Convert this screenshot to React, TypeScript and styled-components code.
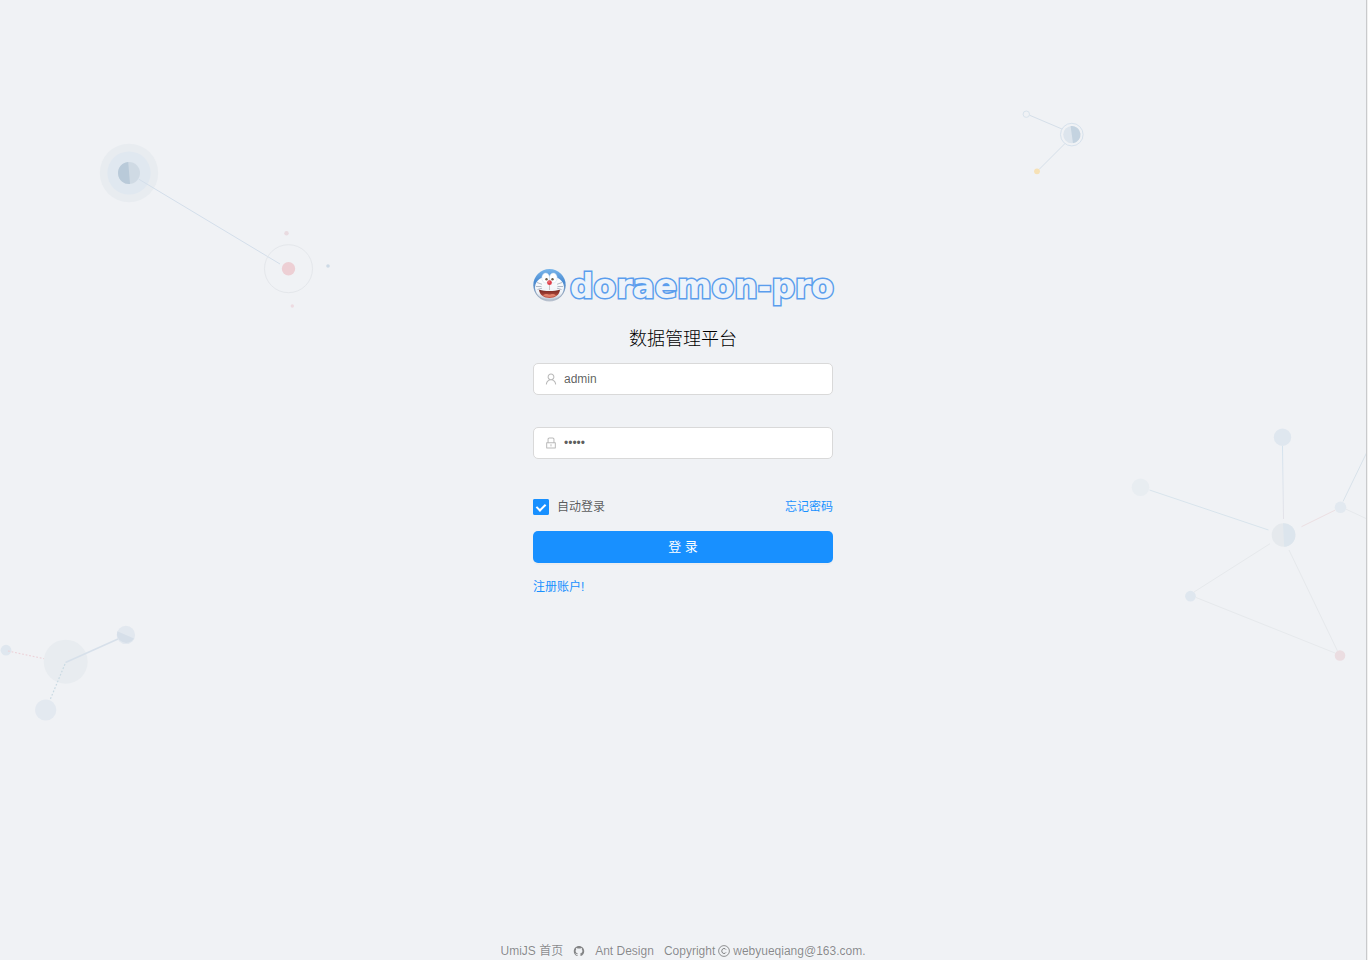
import React from "react";
import styled, { createGlobalStyle } from "styled-components";
import {
  AiOutlineUser,
  AiOutlineLock,
  AiFillGithub,
} from "react-icons/ai";

const GlobalStyle = createGlobalStyle`
  * { box-sizing: border-box; }
  body {
    margin: 0;
    background: #f0f2f5;
    color: rgba(0, 0, 0, 0.65);
    font-family: "Liberation Sans", "Noto Sans CJK SC", sans-serif;
    font-size: 12px;
    line-height: 18px;
  }
`;

const Shell = styled.div`
  display: flex;
  min-height: 100vh;
`;

const Page = styled.div`
  position: relative;
  flex: 1;
  min-width: 0;
  display: flex;
  flex-direction: column;
  overflow: hidden;
`;

const Edge = styled.div`
  width: 2px;
  background: #f1f1f1;
  border-left: 1px solid #c9cacc;
`;

const Backdrop = styled.svg`
  position: absolute;
  inset: 0;
  width: 100%;
  height: 100%;
  pointer-events: none;
`;

const Main = styled.main`
  position: relative;
  flex: 1;
  display: flex;
  flex-direction: column;
  align-items: center;
  padding: 265px 16px 32px;
`;

const LoginForm = styled.form`
  width: 100%;
  max-width: 300px;
  display: flex;
  flex-direction: column;
`;

const Brand = styled.div`
  display: flex;
  align-items: center;
  gap: 4px;
  height: 40px;
`;

const BrandFace = styled.svg`
  flex: none;
  width: 33px;
  height: 33px;
`;

const BrandName = styled.span`
  padding-top: 3px;
  font-family: "DejaVu Sans", sans-serif;
  font-size: 33px;
  line-height: 40px;
  font-weight: 700;
  color: #edf3fa;
  -webkit-text-stroke: 3px #5a9ded;
  paint-order: stroke fill;
  white-space: nowrap;
`;

const Title = styled.h1`
  margin: 19px 0 9px;
  font-size: 18px;
  line-height: 30px;
  font-weight: 300;
  color: #000;
  text-align: center;
`;

const Field = styled.label`
  display: flex;
  align-items: center;
  gap: 6px;
  height: 32px;
  margin-bottom: 32px;
  padding: 0 11px 0 10px;
  background: #fff;
  border: 1px solid #d9d9d9;
  border-radius: 5px;

  svg {
    flex: none;
    width: 14px;
    height: 14px;
    color: rgba(0, 0, 0, 0.28);
  }
`;

const TextInput = styled.input`
  flex: 1;
  min-width: 0;
  padding: 0;
  border: 0;
  outline: 0;
  background: transparent;
  color: rgba(0, 0, 0, 0.65);
  font: inherit;
`;

const Options = styled.div`
  display: flex;
  align-items: center;
  justify-content: space-between;
  height: 32px;
  margin-bottom: 8px;
`;

const CheckLabel = styled.label`
  display: flex;
  align-items: center;
  gap: 8px;
`;

const Checkbox = styled.input`
  appearance: none;
  display: flex;
  align-items: flex-start;
  justify-content: center;
  width: 16px;
  height: 16px;
  margin: 0;
  padding-top: 3px;
  border-radius: 2px;
  box-shadow: inset 0 0 0 1px #1890ff;

  &:checked {
    background: #1890ff;
  }
  &:checked::after {
    content: "";
    width: 6px;
    height: 9px;
    border: solid #fff;
    border-width: 0 2px 2px 0;
    box-sizing: border-box;
    transform: rotate(45deg);
  }
`;

const TextLink = styled.a`
  color: #1890ff;
  text-decoration: none;
`;

const SubmitButton = styled.button`
  height: 32px;
  margin: 0 0 15px;
  padding: 0;
  border: 0;
  border-radius: 5px;
  background: #1890ff;
  color: #fff;
  font: inherit;
  font-size: 13px;
  box-shadow: 0 2px 0 rgba(0, 0, 0, 0.02);
  cursor: pointer;
`;

const Footer = styled.footer`
  position: relative;
  display: flex;
  flex-wrap: wrap;
  justify-content: center;
  gap: 10px;
  color: rgba(0, 0, 0, 0.45);
`;

const FooterLink = styled.a`
  display: flex;
  align-items: center;
  color: inherit;
  text-decoration: none;
`;

const Copyright = styled.span`
  display: flex;
  align-items: center;
  gap: 3px;
`;

function NetworkBackdrop() {
  return (
    <Backdrop viewBox="0 0 1366 960" preserveAspectRatio="xMidYMin slice" fill="none" aria-hidden="true">
      <g>
        <circle cx="129" cy="173" r="29.2" fill="#e8ecf0" />
        <circle cx="129" cy="173" r="21.6" fill="#e0e8f0" />
        <circle cx="129" cy="173" r="11" fill="#cfdae4" />
        <path d="M128.2 162A11 11 0 0 0 130 184Z" fill="#b9cad9" />
        <path d="M138.500 179L280 264" stroke="#d3deea" />
        <circle cx="288.500" cy="268.700" r="24" stroke="#e4e7eb" />
        <circle cx="288.500" cy="268.700" r="6.700" fill="#edcfd4" />
        <circle cx="286.500" cy="233.200" r="2.200" fill="#e9dbe0" />
        <circle cx="328" cy="266" r="1.800" fill="#cddae6" />
        <circle cx="292.300" cy="306" r="1.700" fill="#eddbe1" />
      </g>
      <g>
        <path d="M1029.500 115.200L1062 129M1065 143.500L1039 169.500" stroke="#d5dfe9" />
        <circle cx="1026.300" cy="114.200" r="3.200" stroke="#d8e3ec" />
        <circle cx="1037" cy="171.300" r="2.900" fill="#f6e1b6" />
        <circle cx="1071.800" cy="134.600" r="11.300" stroke="#d6e1ec" />
        <circle cx="1071.800" cy="134.600" r="8.600" fill="#dde5ed" />
        <path d="M1070.600 126A8.600 8.600 0 0 1 1073 143.200Z" fill="#c4d3e0" />
      </g>
      <g>
        <path d="M1149.500 490L1268.500 530" stroke="#d8e4ec" />
        <path d="M1282.500 446L1283.500 519" stroke="url(#stem)" />
        <path d="M1343 501.500L1366.500 453" stroke="#d8e2ea" />
        <path d="M1301.500 526.700L1335 510.200" stroke="#ecdfe2" />
        <path d="M1346 509.200L1366 518.500M1270 543.700L1194 592M1289 550L1337.500 651M1196 597.500L1335 653" stroke="#e6e9ec" />
        <circle cx="1140.500" cy="487.300" r="8.800" fill="#e8edf1" />
        <circle cx="1282.500" cy="437.200" r="8.700" fill="#dfe7ef" />
        <circle cx="1340.500" cy="507.300" r="5.800" fill="#e2e9f0" />
        <circle cx="1283.500" cy="535" r="11.800" fill="#e5e9ed" />
        <path d="M1283 523.200A11.800 11.800 0 0 1 1284.200 546.800Z" fill="#dce5ed" />
        <circle cx="1190.500" cy="596.200" r="5.400" fill="#dfe7ef" />
        <circle cx="1340" cy="655.500" r="5.300" fill="#ebdde1" />
      </g>
      <g>
        <circle cx="65.700" cy="661.700" r="22" fill="#e8ecf0" />
        <circle cx="6" cy="650.200" r="5.400" fill="#dfe7ef" />
        <circle cx="45.700" cy="710" r="10.600" fill="#e3e9f0" />
        <circle cx="125.900" cy="634.900" r="9.200" fill="#e2e8ef" />
        <path d="M117.300 631.200L134 638.500A9.200 9.200 0 0 1 117.300 631.200Z" fill="#d6dfe9" />
        <path d="M65.500 662.500L118 639" stroke="#d7e0ea" strokeWidth="1.600" />
        <path d="M8 651L44 658.700" stroke="#ecd3d9" strokeWidth="1.200" strokeDasharray="1.800 1.800" />
        <path d="M65 664L50 700" stroke="#c9dae3" strokeWidth="1.200" strokeDasharray="1.800 1.800" />
      </g>
      <defs>
        <linearGradient id="stem" gradientUnits="userSpaceOnUse" x1="0" y1="446" x2="0" y2="519">
          <stop stopColor="#d4e3ee" />
          <stop offset="1" stopColor="#e3e2e8" />
        </linearGradient>
      </defs>
    </Backdrop>
  );
}

function CatFace() {
  return (
    <BrandFace viewBox="0 0 33 33" role="img" aria-label="Doraemon">
      <defs>
        <linearGradient id="head" x1="0" y1="0" x2="0" y2="1">
          <stop stopColor="#78b5ea" />
          <stop offset=".4" stopColor="#4a8bd2" />
          <stop offset=".75" stopColor="#8ea3bd" />
          <stop offset="1" stopColor="#bcc4d0" />
        </linearGradient>
        <linearGradient id="mouth" x1="0" y1="0" x2="0" y2="1">
          <stop stopColor="#76261f" />
          <stop offset="1" stopColor="#c9594a" />
        </linearGradient>
        <linearGradient id="muzzle" x1="0" y1="0" x2="0" y2="1">
          <stop stopColor="#fff" />
          <stop offset=".7" stopColor="#eef2f7" />
          <stop offset="1" stopColor="#c3ccd8" />
        </linearGradient>
      </defs>
      <circle cx="16.500" cy="16.300" r="16.200" fill="url(#head)" />
      <path d="M9.500 8.500C4.500 10.500 2 14 2 19C3 27 9 30.500 16.500 30.500S30 27 31 19C31 14 28.500 10.500 23.500 8.500Z" fill="url(#muzzle)" />
      <ellipse cx="12.700" cy="9" rx="3.900" ry="5" fill="#fff" stroke="#c6d8ea" strokeWidth=".5" />
      <ellipse cx="20.300" cy="9" rx="3.900" ry="5" fill="#fff" stroke="#c6d8ea" strokeWidth=".5" />
      <circle cx="13.500" cy="10.300" r="1.200" fill="#6b5d4a" />
      <circle cx="19.500" cy="10.300" r="1.200" fill="#6b5d4a" />
      <path d="M16.500 15V21" stroke="#b9b1b4" strokeWidth=".7" />
      <circle cx="16.500" cy="13.700" r="2.400" fill="#df3e49" />
      <circle cx="16" cy="13" r=".7" fill="#f6a5a4" />
      <path d="M6 20.800C12 22.400 21 22.400 27 20.800C26.500 26 22 29 16.500 29S6.500 26 6 20.800Z" fill="url(#mouth)" />
      <path d="M10 26.200C13 23.800 15 25.500 16.500 25.500S20 23.800 23 26.200C21 28.500 12 28.500 10 26.200Z" fill="#e0806a" />
      <path d="M4 13.500L9 15.300M3 17.500H8.500M4.500 20.500L9 19.200M29 13.500L24 15.300M30 17.500H24.500M28.500 20.500L24 19.200" stroke="#8590a1" strokeWidth=".6" />
    </BrandFace>
  );
}

function CopyrightMark() {
  return (
    <svg width="12" height="12" viewBox="0 0 12 12" fill="none" stroke="currentColor" aria-hidden="true">
      <circle cx="6" cy="6" r="5.400" strokeWidth=".9" />
      <path d="M8 4.600C7.600 3.900 6.900 3.500 6 3.500C4.700 3.500 3.800 4.600 3.800 6S4.700 8.500 6 8.500C6.900 8.500 7.600 8.100 8 7.400" strokeWidth="1" />
    </svg>
  );
}

export default function App() {
  return (
    <>
      <GlobalStyle />
      <Shell>
        <Page>
          <NetworkBackdrop />
          <Main>
            <LoginForm onSubmit={(event) => event.preventDefault()}>
              <Brand>
                <CatFace />
                <BrandName>doraemon-pro</BrandName>
              </Brand>
              <Title>数据管理平台</Title>
              <Field>
                <AiOutlineUser />
                <TextInput type="text" aria-label="用户名" autoComplete="username" defaultValue="admin" />
              </Field>
              <Field>
                <AiOutlineLock />
                <TextInput type="password" aria-label="密码" autoComplete="current-password" defaultValue="admin" />
              </Field>
              <Options>
                <CheckLabel>
                  <Checkbox type="checkbox" defaultChecked />
                  自动登录
                </CheckLabel>
                <TextLink href="#forgot">忘记密码</TextLink>
              </Options>
              <SubmitButton type="submit">登 录</SubmitButton>
              <div>
                <TextLink href="#register">注册账户!</TextLink>
              </div>
            </LoginForm>
          </Main>
          <Footer>
            <FooterLink href="#umi">UmiJS 首页</FooterLink>
            <FooterLink href="#github" aria-label="GitHub">
              <AiFillGithub size={12} />
            </FooterLink>
            <FooterLink href="#antd">Ant Design</FooterLink>
            <Copyright>
              Copyright <CopyrightMark /> webyueqiang@163.com.
            </Copyright>
          </Footer>
        </Page>
        <Edge />
      </Shell>
    </>
  );
}
